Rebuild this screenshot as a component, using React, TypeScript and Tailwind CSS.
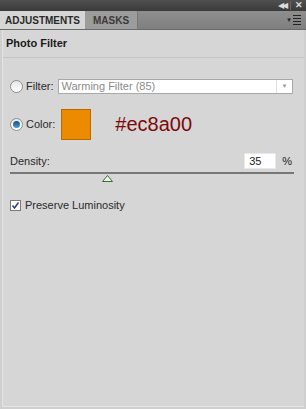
import React from 'react';

const font = { fontFamily: '"Liberation Sans", Arial, sans-serif' };

const Radio = ({ checked }: { checked?: boolean }) => (
    <div className="w-[13px] h-[13px] rounded-full border border-[#8f8f8f] bg-gradient-to-b from-[#e6e6e6] to-[#ffffff] flex items-center justify-center">
        {checked && <div className="w-[7px] h-[7px] rounded-full bg-gradient-to-b from-[#1d4f7a] to-[#4aa0d8]" />}
    </div>
);

export default function App() {
    return (
        <div className="w-[306px] h-[409px] bg-[#cfcfcf] flex flex-col text-[#1a1a1a] text-[11px] overflow-hidden" style={font}>
            {/* title strip */}
            <div className="h-[11px] bg-gradient-to-b from-[#505050] to-[#3a3a3a] flex items-center justify-end pr-[3px] gap-[4px]">
                <span className="text-[8px] text-[#dcdcdc] leading-none tracking-[-2px]">◀◀</span>
                <div className="w-px h-[9px] bg-[#666]" />
                <span className="text-[9px] font-bold text-[#dcdcdc] leading-none">✕</span>
            </div>
            {/* tabs */}
            <div className="h-[19px] bg-gradient-to-b from-[#8e8e8e] to-[#7f7f7f] flex items-end border-b border-[#6a6a6a]">
                <div className="h-[18px] px-[5px] bg-[#d6d6d6] flex items-center font-bold text-[10px] text-[#2a2a2a]">ADJUSTMENTS</div>
                <div className="h-[18px] px-[8px] bg-[#9c9c9c] flex items-center font-bold text-[10px] text-[#3a3a3a] border-r border-[#777]">MASKS</div>
                <div className="flex-1" />
                <div className="h-[18px] flex items-center pr-[5px] gap-[1px]">
                    <span className="text-[6px] text-[#222]">▼</span>
                    <div className="flex flex-col gap-[2px]">
                        <div className="w-[8px] h-px bg-[#222]" />
                        <div className="w-[8px] h-px bg-[#222]" />
                        <div className="w-[8px] h-px bg-[#222]" />
                        <div className="w-[8px] h-px bg-[#222]" />
                    </div>
                </div>
            </div>
            {/* body */}
            <div className="flex-1 bg-[#d6d6d6] mx-[2px] mb-[2px] border-l border-b border-[#e4e4e4] flex flex-col">
                <div className="h-[28px] flex items-center px-[3px] font-bold text-[11px] border-b border-[#c4c4c4]">Photo Filter</div>
                <div className="flex items-center mt-[20px] pl-[7px] pr-[11px]">
                    <Radio />
                    <span className="ml-[3px] text-[#2a2a2a]">Filter:</span>
                    <div className="ml-[4px] flex-1 h-[15px] bg-white border border-[#a8a8a8] flex items-center">
                        <span className="pl-[3px] text-[#8a8a8a] flex-1">Warming Filter (85)</span>
                        <div className="w-[16px] h-full border-l border-[#e0e0e0] flex items-center justify-center">
                            <span className="text-[6px] text-[#999]">▼</span>
                        </div>
                    </div>
                </div>
                <div className="flex items-center mt-[14px] pl-[7px]">
                    <Radio checked />
                    <span className="ml-[3px] text-[#2a2a2a]">Color:</span>
                    <div className="ml-[6px] w-[30px] h-[31px] bg-[#ec8a00] border border-[#b86a00]" />
                    <span className="ml-[24px] text-[20px] text-[#7a0a0a] leading-none">#ec8a00</span>
                </div>
                <div className="flex items-center mt-[13px] pl-[7px] pr-[12px]">
                    <span className="text-[#2a2a2a]">Density:</span>
                    <div className="flex-1" />
                    <div className="w-[32px] h-[16px] bg-white border border-[#e8e8e8] flex items-center pl-[4px] text-[#222]">35</div>
                    <span className="ml-[6px] text-[#222]">%</span>
                </div>
                <div className="relative mt-[3px] ml-[7px] mr-[10px] h-[10px]">
                    <div className="h-[2px] bg-[#777]" />
                    <svg className="absolute left-[92px] top-[3px]" width="11" height="7" viewBox="0 0 11 7">
                        <polygon points="5.5,0.5 10.5,6.5 0.5,6.5" fill="#e8f5e4" stroke="#3f6b3a" strokeWidth="1" />
                    </svg>
                </div>
                <div className="flex items-center mt-[15px] pl-[7px]">
                    <div className="w-[11px] h-[11px] border border-[#7a7a7a] bg-white flex items-center justify-center">
                        <svg width="9" height="9" viewBox="0 0 9 9">
                            <path d="M1.5 4.5 L3.5 7 L7.5 1.5" fill="none" stroke="#2a3d8a" strokeWidth="1.5" />
                        </svg>
                    </div>
                    <span className="ml-[4px] text-[#2a2a2a]">Preserve Luminosity</span>
                </div>
            </div>
        </div>
    );
}
